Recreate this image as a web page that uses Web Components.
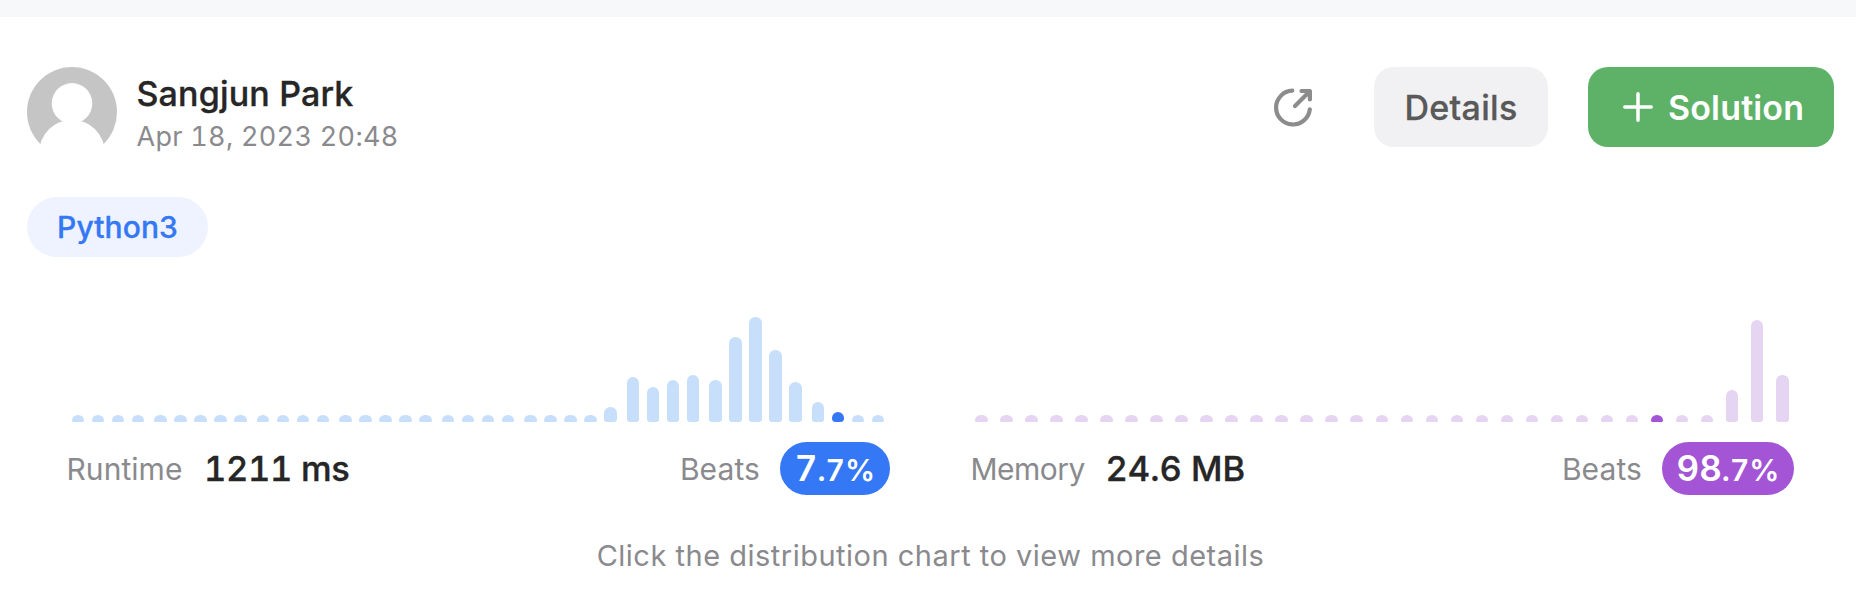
<!DOCTYPE html>
<html lang="en"><head><meta charset="utf-8"><title>Submission</title>
<style>
html,body{margin:0;height:100%;overflow:hidden}
body{background:#fff;font-family:Inter,"Liberation Sans",sans-serif}
</style></head><body>
<submission-page></submission-page>
<script>
const define=(name,html,init)=>customElements.define(name,class extends HTMLElement{
  constructor(){super();this.attachShadow({mode:'open'}).innerHTML=html;}
  connectedCallback(){if(init)init(this,this.shadowRoot);}
});

define('user-avatar',`<style>:host{display:block;width:90px;height:90px;flex:none}svg{display:block}</style>
<svg width="90" height="90" viewBox="0 0 90 90"><circle cx="45" cy="45" r="45" fill="#c5c5c5"/><circle cx="45" cy="85.800" r="33" fill="#fff"/><rect y="77" width="90" height="13" fill="#fff"/><circle cx="45" cy="36.400" r="20.300" fill="#fff"/></svg>`);

define('user-card',`<style>:host{display:flex;gap:19.500px;align-items:flex-start}
.t{display:flex;flex-direction:column;padding-top:5px;white-space:nowrap}
.n{font-size:34px;line-height:44px;font-weight:500;-webkit-text-stroke:.35px;color:#262626;letter-spacing:.15px}
.d{font-size:27px;line-height:42px;color:#8a8a8e;letter-spacing:.3px;font-variant-numeric:tabular-nums}</style>
<user-avatar></user-avatar><div class="t"><div class="n"><slot name="name"></slot></div><div class="d"><slot name="date"></slot></div></div>`);

define('share-icon',`<style>:host{display:block;width:40px;height:40px}svg{display:block}</style>
<svg width="40" height="40" viewBox="0 0 40 40" fill="none" stroke="#8c8c8c" stroke-width="4.200" stroke-linecap="round" stroke-linejoin="round"><path d="M19.300 3.700A16.900 16.900 0 1 0 36.800 22.300"/><path d="M22 19L36 5M28.500 4H36.900V12.500"/></svg>`);

define('action-button',`<style>:host{display:flex;box-sizing:border-box;align-items:center;justify-content:center;width:174px;height:80px;border-radius:20px;white-space:nowrap;font-size:34px;font-weight:500;-webkit-text-stroke:.3px;background:#f1f1f4;color:#595959;letter-spacing:.3px}
:host([primary]){width:246px;background:#5db268;color:#fff;justify-content:flex-start;padding-left:35px;font-weight:600;-webkit-text-stroke:0;letter-spacing:.15px}
svg{display:none;margin-right:15px}:host([primary]) svg{display:block}span{padding-top:1px}</style>
<svg width="30" height="30" viewBox="0 0 30 30" stroke="#fff" stroke-width="3.500" stroke-linecap="round"><path d="M15 1.800V28.200M1.800 15H28.200"/></svg><span><slot></slot></span>`);

define('language-tag',`<style>:host{display:flex;box-sizing:border-box;align-items:center;justify-content:center;width:181px;height:60px;border-radius:30px;background:#eff3ff;color:#3478f6;font-size:30px;font-weight:500;-webkit-text-stroke:.35px;letter-spacing:.1px}</style><slot></slot>`);

define('bar-chart',`<style>:host{display:flex;align-items:flex-end;height:120px}
i{display:block;width:12.500px;flex:none;border-radius:6.250px 6.250px 3px 3px;background:var(--soft)}
i.dot{border-radius:6.250px 6.250px 1.500px 1.500px / 5.500px 5.500px 2px 2px}i.hit{background:var(--strong)}i.hit.round{border-radius:6.250px 6.250px 4px 4px}</style>`,(el,r)=>{
  const h=el.getAttribute('values').split(',').map(Number),hit=+el.getAttribute('hit');
  const xs=h.map((_,i)=>el.hasAttribute('wide')?i*25.035:(8*i+Math.floor((i+.5)/4.5))*2.5);
  h.forEach((v,i)=>{const b=document.createElement('i');b.style.height=v+'px';
    if(i)b.style.marginLeft=(xs[i]-xs[i-1]-12.5)+'px';
    if(v<9)b.className='dot';
    if(i===hit)b.className=v>9?'hit round':'dot hit';r.append(b);});
});

define('metric-card',`<style>:host{display:flex;flex-direction:column;white-space:nowrap}
.c{padding-left:var(--inset)}
.r{display:flex;align-items:center;height:53px;margin-top:20px;color:#8a8a8e;font-size:30px}
.v{color:#262626;font-size:34.500px;font-weight:500;-webkit-text-stroke:.35px;margin-left:var(--gap);flex:1;letter-spacing:var(--vls);font-variant-numeric:tabular-nums}
.p{display:flex;box-sizing:border-box;justify-content:center;align-items:baseline;height:53px;line-height:53px;border-radius:27px;width:var(--pill);margin-left:20px;background:var(--strong);color:#fff;font-size:35px;font-weight:600;font-variant-numeric:tabular-nums}
.l{letter-spacing:var(--lls)}.b{letter-spacing:.1px}small{font-size:30px}</style>
<div class="c"><slot></slot></div><div class="r"><span class="l"><slot name="label"></slot></span><span class="v"><slot name="value"></slot></span><span class="b">Beats</span><span class="p"><slot name="whole"></slot><small><slot name="fraction"></slot></small></span></div>`);

const low=n=>Array(n).fill(7.5).join(',');
define('submission-page',`<style>:host{display:flex;flex-direction:column;height:594px;box-sizing:border-box;border-top:17px solid #f7f8fa;background:#fff}
header{display:flex;align-items:flex-start;padding:50px 22px 0 27px;height:90px}
.a{display:flex;align-items:center;margin-left:auto}
share-icon{margin-right:61px}.a action-button+action-button{margin-left:40px}
.tags{display:flex;padding:40px 27px 0}
.m{display:flex;padding:45px 0 0 66.500px}
.run{width:823.500px;--soft:#c8dffb;--strong:#3478f6;--inset:5px;--pill:110px;--gap:21.500px;--vls:-.35px;--lls:.05px}
.mem{width:823.500px;margin-left:80.500px;--soft:#e6d5f2;--strong:#a355d6;--inset:4.500px;--pill:132px;--gap:20.500px;--vls:0px;--lls:-.5px}
footer{text-align:center;margin-top:42px;font-size:29px;line-height:38px;color:#8a8a8e;letter-spacing:.5px;padding-left:5px}</style>
<header><user-card><span slot="name">Sangjun Park</span><span slot="date">Apr 18, 2023 20:48</span></user-card>
<div class="a"><share-icon></share-icon><action-button>Details</action-button><action-button primary>Solution</action-button></div></header>
<div class="tags"><language-tag>Python3</language-tag></div>
<div class="m"><metric-card class="run"><bar-chart hit="37" values="${low(26)},15,45,35,42.5,47.5,42.5,85,105,72.5,40,20,10,7.5,7.5"></bar-chart><span slot="label">Runtime</span><span slot="value">1211 ms</span><span slot="whole">7</span><span slot="fraction">.7%</span></metric-card>
<metric-card class="mem"><bar-chart wide hit="27" values="${low(30)},32.5,102.5,47.5"></bar-chart><span slot="label">Memory</span><span slot="value">24.6 MB</span><span slot="whole">98</span><span slot="fraction">.7%</span></metric-card></div>
<footer>Click the distribution chart to view more details</footer>`);
</script></body></html>
